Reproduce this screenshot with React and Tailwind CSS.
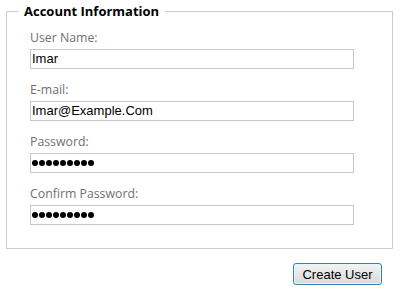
export default function App() {
  const fields = [
    { label: "User Name:", value: "Imar" },
    { label: "E-mail:", value: "Imar@Example.Com" },
    { label: "Password:", password: true },
    { label: "Confirm Password:", password: true },
  ];
  return (
    <div className="w-[401px] h-[291px] bg-white overflow-hidden">
      <fieldset className="ml-[6px] w-[387px] border border-[#cccccc] pl-[11px] pr-0 pb-[23px] pt-0 m-0">
        <legend className="px-[6px] leading-[22px] text-[13px] font-bold text-black" style={{ fontFamily: '"Open Sans", sans-serif' }}>
          Account Information
        </legend>
        <div className="ml-[12px] pt-[7px] flex flex-col gap-[12px]">
          {fields.map((f) => (
            <div key={f.label} className="flex flex-col">
              <div className="text-[12.3px] leading-[17px] text-[#707070] mb-[3px]" style={{ fontFamily: '"Open Sans", sans-serif' }}>
                {f.label}
              </div>
              <div className="w-[324px] h-[20px] border border-[#c8c8c8] bg-white flex items-center pl-[1px]">
                {f.password ? (
                  <div className="flex gap-[1px]">
                    {[0, 1, 2, 3, 4, 5, 6, 7, 8].map((i) => (
                      <span key={i} className="block w-[6px] h-[6px] rounded-full bg-black" />
                    ))}
                  </div>
                ) : (
                  <span className="text-[13px] leading-[16px] text-black" style={{ fontFamily: '"Liberation Sans", Arial, sans-serif' }}>
                    {f.value}
                  </span>
                )}
              </div>
            </div>
          ))}
        </div>
      </fieldset>
      <div className="flex justify-end pr-[19px] mt-[14px]">
        <button className="w-[89px] h-[22px] rounded-[3px] border border-[#3c7fb1] bg-gradient-to-b from-[#f4f4f4] to-[#d9d9d9] shadow-[inset_0_0_0_1px_#e8f4fb] text-[13px] text-black leading-none" style={{ fontFamily: '"Liberation Sans", Arial, sans-serif' }}>
          Create User
        </button>
      </div>
    </div>
  );
}
